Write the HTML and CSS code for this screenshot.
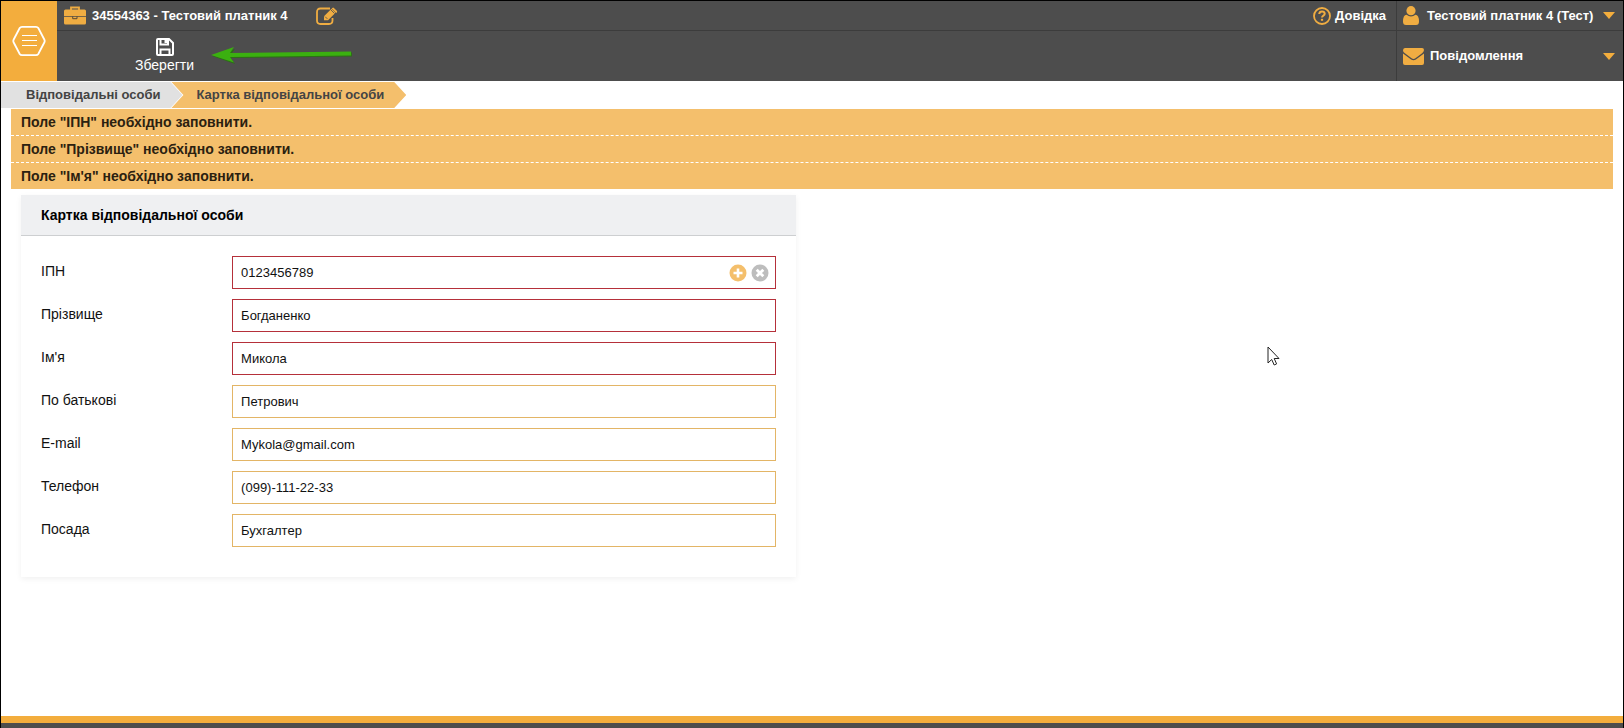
FILE: index.html
```
<!DOCTYPE html>
<html lang="uk">
<head>
    <meta charset="UTF-8">
    <meta name="viewport" content="width=device-width, initial-scale=1.0">
    <title>Картка відповідальної особи</title>
    <link rel="stylesheet" href="styles.css">
</head>
<body>
    <header class="header">
        <button class="menu-btn" type="button" aria-label="Меню">
            <svg width="34" height="32" viewBox="0 0 34 32" fill="none" stroke="#fff">
                <path d="M10 1.800h14q1.500 0 2.300 1.200l6 11.500q.8 1.500 0 3l-6 11.500q-.8 1.200-2.300 1.200h-14q-1.500 0-2.300-1.200l-6-11.500q-.8-1.500 0-3l6-11.500q.8-1.200 2.300-1.200z" stroke-width="1.800"/>
                <path d="M10 10.500h15M10 15.500h15M10 20.500h15"/>
            </svg>
        </button>

        <div class="header-main">
            <div class="company-bar">
                <svg class="briefcase" width="22" height="19" viewBox="0 0 22 19">
                    <path d="M7 4V1.500h8V4" fill="none" stroke="#f0ad42" stroke-width="1.800"/>
                    <path d="M1.500 3.500h19q1.500 0 1.500 1.500v5H0V5q0-1.500 1.500-1.500z" fill="#f0ad42"/>
                    <path d="M0 10.700h22V17q0 1.500-1.500 1.500h-19Q0 18.500 0 17z" fill="#f0ad42"/>
                    <path d="M8.700 10.300v2.400h4.300v-2.400" fill="none" stroke="#5b4b33"/>
                </svg>
                <span class="company">34554363 - Тестовий платник 4</span>
                <button class="icon-btn edit" type="button" aria-label="Змінити">
                    <svg width="22" height="18" viewBox="0 0 22 18">
                        <path d="M14 1.500H4.500Q1 1.500 1 5v8.500Q1 17 4.500 17H13q3.500 0 3.500-3.500v-2.500" fill="none" stroke="#f0ad42" stroke-width="1.800"/>
                        <path d="M8 9.200 15.500 1.700l4 4-7.500 7.500H8z" fill="#f0ad42"/>
                        <path d="M16.300.9q.8-.8 1.600 0l2.900 2.900q.8.800 0 1.600l-.6.600-4.500-4.500z" fill="#f0ad42"/>
                        <path d="M14.700 2.700l3.800 3.800M9.200 9.700l2.200 2.200" stroke="#4d4d4d" stroke-width=".8"/>
                    </svg>
                </button>
                <a class="help" href="#">
                    <svg width="18" height="18" viewBox="0 0 18 18" fill="none" stroke="#f0ad42">
                        <circle cx="9" cy="9" r="8" stroke-width="1.800"/>
                        <path d="M6.200 7q.3-2.500 2.800-2.500t2.700 2.200q0 1.200-1.300 1.900T9 10.500" stroke-width="2"/>
                        <path d="M9 11.800v2" stroke-width="2.200"/>
                    </svg>
                    Довідка
                </a>
            </div>
            <div class="toolbar">
                <button class="save" type="button">
                    <svg width="18" height="18" viewBox="0 0 18 18" fill="none" stroke="#fff" stroke-width="2">
                        <path d="M1 2q0-1 1-1h11l4 4v11q0 1-1 1H2q-1 0-1-1z"/>
                        <path d="M4.500 1v5.500h7.500V1M4.500 17v-5.500h9V17"/>
                        <path d="M8.500 1h2.500v4H8.500z" fill="#fff" stroke="none"/>
                    </svg>
                    Зберегти
                </button>
            </div>
        </div>

        <div class="header-side">
            <button class="side-item user" type="button">
                <svg width="16" height="19" viewBox="0 0 16 19" fill="#f0ad42">
                    <circle cx="8" cy="4.700" r="4.600"/>
                    <path d="M3.600 8.700Q5.500 10.500 8 10.500t4.400-1.800Q16 9 16 15.500 16 19 13 19H3q-3 0-3-3.500Q0 9 3.600 8.700z"/>
                </svg>
                <span>Тестовий платник 4 (Тест)</span>
                <i class="caret"></i>
            </button>
            <button class="side-item messages" type="button">
                <svg width="21" height="18" viewBox="0 0 22 18" preserveAspectRatio="none" fill="#f0ad42">
                    <path d="M0 3.500Q0 1 2 1h18q2 0 2 2-.2 2-2 3.300l-7 5q-2 1.300-4 0l-7-5Q0 5 0 3.500z"/>
                    <path d="M0 6.500l8.500 6q2.500 1.600 5 0l8.500-6V16q0 2-2 2H2q-2 0-2-2z"/>
                </svg>
                <span>Повідомлення</span>
                <i class="caret"></i>
            </button>
        </div>
    </header>

    <nav class="breadcrumbs">
        <a class="crumb" href="#">Відповідальні особи</a>
        <a class="crumb active" href="#">Картка відповідальної особи</a>
    </nav>

    <main class="content">
        <ul class="alerts">
            <li>Поле "ІПН" необхідно заповнити.</li>
            <li>Поле "Прізвище" необхідно заповнити.</li>
            <li>Поле "Ім'я" необхідно заповнити.</li>
        </ul>

        <section class="card">
            <h2>Картка відповідальної особи</h2>
            <form class="fields">
                <div class="row">
                    <label for="ipn">ІПН</label>
                    <div class="control">
                        <input class="required" id="ipn" type="text" value="0123456789">
                        <div class="actions">
                            <button class="icon-btn" type="button" aria-label="Додати">
                                <svg width="18" height="18" viewBox="0 0 18 18">
                                    <circle cx="9" cy="9" r="8.500" fill="#f4bf6c"/>
                                    <path d="M9 4.500v9M4.500 9h9" stroke="#fff" stroke-width="2.600"/>
                                </svg>
                            </button>
                            <button class="icon-btn" type="button" aria-label="Очистити">
                                <svg width="18" height="18" viewBox="0 0 18 18">
                                    <circle cx="9" cy="9" r="8.500" fill="#bdbdbd"/>
                                    <path d="M5.700 5.700l6.600 6.600M12.300 5.700l-6.600 6.600" stroke="#fff" stroke-width="2.800"/>
                                </svg>
                            </button>
                        </div>
                    </div>
                </div>
                <div class="row">
                    <label for="surname">Прізвище</label>
                    <div class="control"><input class="required" id="surname" type="text" value="Богданенко"></div>
                </div>
                <div class="row">
                    <label for="name">Ім'я</label>
                    <div class="control"><input class="required" id="name" type="text" value="Микола"></div>
                </div>
                <div class="row">
                    <label for="patronymic">По батькові</label>
                    <div class="control"><input id="patronymic" type="text" value="Петрович"></div>
                </div>
                <div class="row">
                    <label for="email">E-mail</label>
                    <div class="control"><input id="email" type="email" value="Mykola@gmail.com"></div>
                </div>
                <div class="row">
                    <label for="phone">Телефон</label>
                    <div class="control"><input id="phone" type="tel" value="(099)-111-22-33"></div>
                </div>
                <div class="row">
                    <label for="position">Посада</label>
                    <div class="control"><input id="position" type="text" value="Бухгалтер"></div>
                </div>
            </form>
        </section>
    </main>

    <footer class="footer"></footer>

    <!-- hint arrow and pointer lie over the page -->
    <svg class="hint-arrow" width="142" height="18" viewBox="0 0 142 18">
        <path d="M0 8 23 1l-4 5.500L140 4.500v4L19 10l4 6z" fill="#2c6f16" transform="translate(1 1)"/>
        <path d="M0 8 23 0l-4 6L140 4.500v4L19 10l4 5.500z" fill="#3bb010"/>
    </svg>
    <svg class="pointer" width="13" height="20" viewBox="0 0 13 20">
        <path d="M1 1v16l3.700-3.500L7.200 19l2.400-1.100L7.200 12.500H12z" fill="#fff" stroke="#222"/>
    </svg>
</body>
</html>
```
FILE: styles.css
```
* {
    box-sizing: border-box;
}

body {
    margin: 0;
    min-height: 100vh;
    display: flex;
    flex-direction: column;
    position: relative;
    border: 1px solid #000;
    border-bottom: 0;
    background: #fff;
    color: #111;
    font: 14px/16px "Liberation Sans", Arial, sans-serif;
}

button {
    margin: 0;
    padding: 0;
    border: 0;
    background: none;
    color: inherit;
    font: inherit;
    cursor: pointer;
}

a {
    color: inherit;
    text-decoration: none;
}

svg {
    display: block;
    flex: none;
}

/* Header */
.header {
    display: flex;
    height: 80px;
    background: #4d4d4d;
    color: #fff;
}

.menu-btn {
    display: flex;
    align-items: center;
    justify-content: center;
    width: 56px;
    background: #f3ad3d;
}

.header-main {
    flex: 1;
    display: flex;
    flex-direction: column;
}

.company-bar {
    display: flex;
    align-items: center;
    height: 30px;
    padding: 0 10px 0 7px;
    border-bottom: 1px solid #3c3c3c;
    font-size: 13px;
    font-weight: bold;
}

.company {
    margin-left: 6px;
}

.edit {
    margin-left: 28px;
}

.help {
    display: flex;
    align-items: center;
    gap: 4px;
    margin-left: auto;
}

.toolbar {
    flex: 1;
    display: flex;
    padding-left: 78px;
}

.save {
    display: flex;
    flex-direction: column;
    align-items: center;
    padding-top: 7px;
    gap: 1px;
}

.header-side {
    display: flex;
    flex-direction: column;
    width: 227px;
    border-left: 1px solid #3c3c3c;
}

.side-item {
    display: flex;
    align-items: center;
    font-size: 13px;
    font-weight: bold;
    padding: 0 8px 0 6px;
}

.user {
    height: 30px;
    gap: 8px;
    border-bottom: 1px solid #3c3c3c;
}

.messages {
    flex: 1;
    gap: 6px;
}

.caret {
    margin-left: auto;
    border: 6px solid transparent;
    border-top: 7px solid #f3ad3d;
    border-bottom: 0;
}

/* Breadcrumbs */
.breadcrumbs {
    display: flex;
    margin-top: 1px;
    color: #444;
    font-size: 13px;
    font-weight: bold;
}

.crumb {
    padding: 5px 22px 5px 25px;
    background: #e1e1e1;
    clip-path: polygon(0 0, calc(100% - 12px) 0, 100% 50%, calc(100% - 12px) 100%, 0 100%);
}

.crumb.active {
    margin-left: -11px;
    background: #f4bf6c;
    clip-path: polygon(0 0, calc(100% - 12px) 0, 100% 50%, calc(100% - 12px) 100%, 0 100%, 12px 50%);
}

/* Content */
.content {
    flex: 1;
    padding: 1px 10px 20px;
}

.alerts {
    margin: 0;
    padding: 0;
    list-style: none;
    background: #f4bf6c;
    color: #2b2110;
    font-weight: bold;
}

.alerts li {
    padding: 5px 10px;
}

.alerts li + li {
    border-top: 1px dashed #fff;
}

.card {
    width: calc(50% - 26px);
    margin: 6px 0 0 10px;
    box-shadow: 0 2px 6px rgba(0, 0, 0, 0.06);
}

.card h2 {
    margin: 0;
    padding: 12px 20px;
    background: #eff0f2;
    border-bottom: 1px solid #cdcfd1;
    color: #000;
    font-size: 14px;
    line-height: 16px;
}

.fields {
    display: flex;
    flex-direction: column;
    gap: 10px;
    padding: 20px 20px 30px;
}

.row {
    display: grid;
    grid-template-columns: 26% 1fr;
}

.row label {
    padding-top: 7px;
}

.control {
    position: relative;
}

.control input {
    display: block;
    width: 100%;
    height: 33px;
    padding: 0 8px;
    border: 1px solid #e3b566;
    background: #fff;
    color: #111;
    font: inherit;
    font-size: 13px;
    outline: 0;
}

.control input.required {
    border-color: #b5303a;
}

.actions {
    position: absolute;
    top: 8px;
    right: 7px;
    display: flex;
    gap: 4px;
}

/* Footer */
.footer {
    height: 12px;
    border-top: 7px solid #f3ad3d;
    background: #4d4d4d;
}

.hint-arrow {
    position: absolute;
    top: 46px;
    left: 210px;
}

.pointer {
    position: absolute;
    top: 345px;
    left: 1266px;
}
```
